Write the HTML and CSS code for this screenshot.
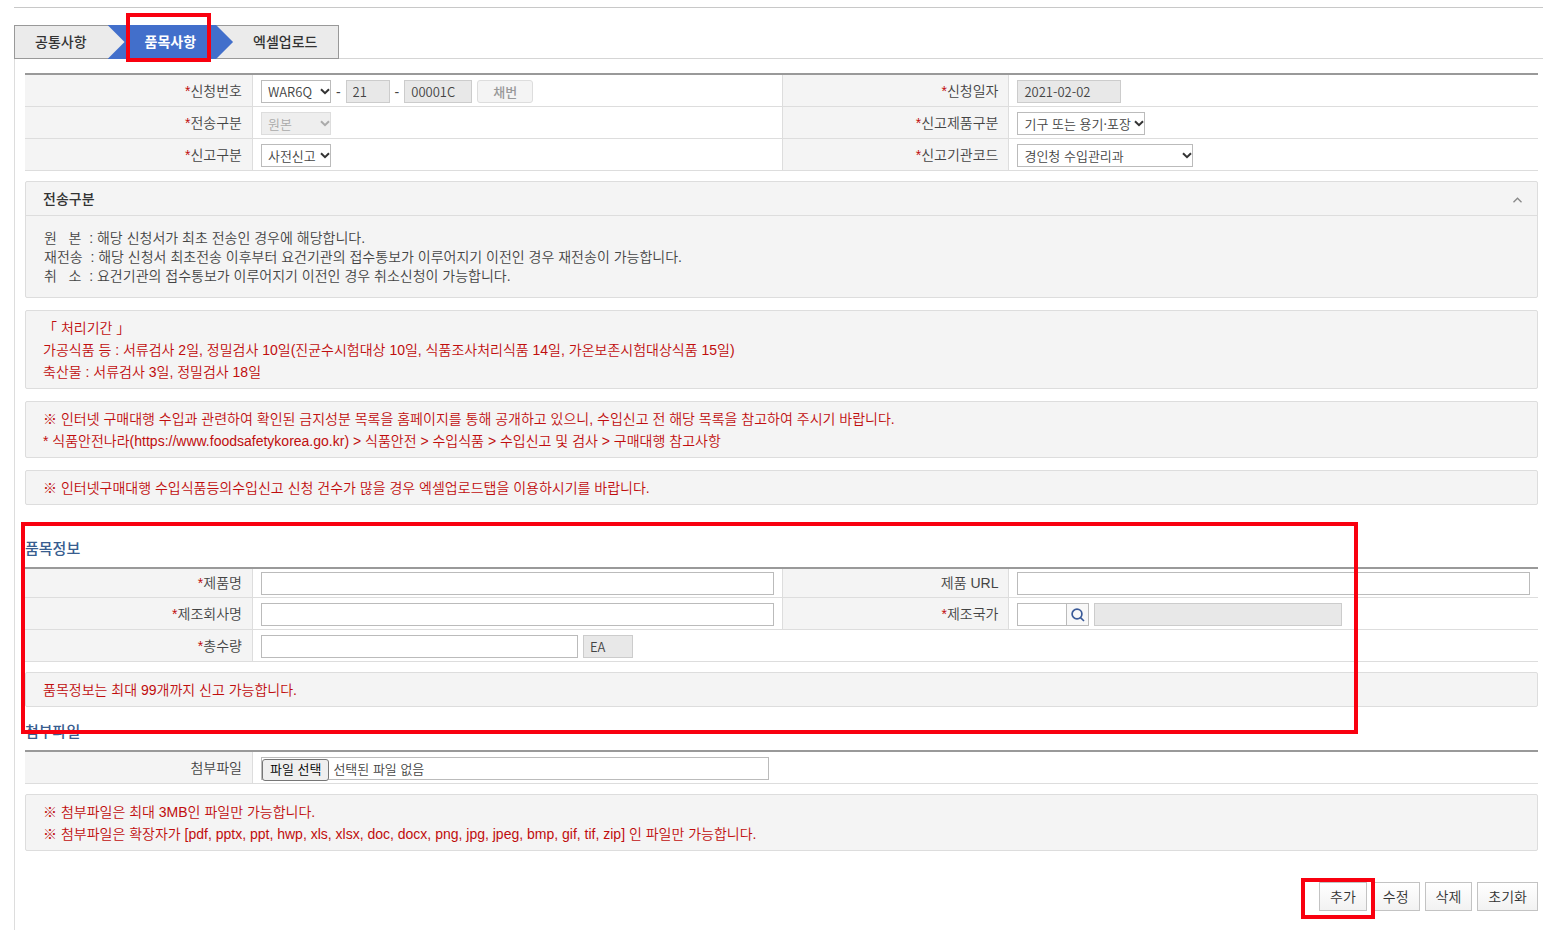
FILE: index.html
```html
<!DOCTYPE html>
<html lang="ko">
  <head>
    <meta charset="utf-8" />
    <title>품목사항</title>
    <link rel="stylesheet" href="styles.css">
  </head>

  <body>
    <div class="page">
      <nav class="tabs">
        <a class="tab" href="#common">공통사항</a>
        <div class="tab-current">
          <a class="tab tab-on" href="#item">품목사항</a>
          <span class="mark mark-tab"></span>
        </div>
        <a class="tab" href="#excel">엑셀업로드</a>
      </nav>

      <main class="panel">
        <table class="form-table">
          <tr>
            <th><label for="req-no"><i>*</i>신청번호</label></th>
            <td>
              <div class="fields">
                <select id="req-no" class="w-70"><option>WAR6Q</option></select>
                <span class="dash">-</span>
                <input class="w-44" type="text" value="21" aria-label="연도" readonly>
                <span class="dash">-</span>
                <input class="w-68" type="text" value="00001C" aria-label="일련번호" readonly>
                <button class="btn-small" type="button" disabled>채번</button>
              </div>
            </td>
            <th><label for="req-date"><i>*</i>신청일자</label></th>
            <td><div class="fields"><input id="req-date" class="w-104" type="text" value="2021-02-02" readonly></div></td>
          </tr>
          <tr>
            <th><label for="send-type"><i>*</i>전송구분</label></th>
            <td><div class="fields"><select id="send-type" class="w-70" disabled><option>원본</option></select></div></td>
            <th><label for="product-type"><i>*</i>신고제품구분</label></th>
            <td><div class="fields"><select id="product-type" class="w-128"><option>기구 또는 용기·포장</option></select></div></td>
          </tr>
          <tr>
            <th><label for="report-type"><i>*</i>신고구분</label></th>
            <td><div class="fields"><select id="report-type" class="w-70"><option>사전신고</option></select></div></td>
            <th><label for="office"><i>*</i>신고기관코드</label></th>
            <td><div class="fields"><select id="office" class="w-176"><option>경인청 수입관리과</option></select></div></td>
          </tr>
        </table>

        <section class="guide">
          <div class="guide-head">
            <h2>전송구분</h2>
            <button class="fold" type="button" aria-label="접기">
              <svg width="9" height="6" viewBox="0 0 9 6"><path d="M0.5 5.2 4.5 1.2 8.5 5.2" fill="none" stroke="#888" stroke-width="1.3"/></svg>
            </button>
          </div>
          <div class="guide-body">
            <p>원 &nbsp; 본 &nbsp;: 해당 신청서가 최초 전송인 경우에 해당합니다.</p>
            <p>재전송 &nbsp;: 해당 신청서 최초전송 이후부터 요건기관의 접수통보가 이루어지기 이전인 경우 재전송이 가능합니다.</p>
            <p>취 &nbsp; 소 &nbsp;: 요건기관의 접수통보가 이루어지기 이전인 경우 취소신청이 가능합니다.</p>
          </div>
        </section>

        <div class="notice">
          <p>「 처리기간 」</p>
          <p>가공식품 등 : 서류검사 2일, 정밀검사 10일(진균수시험대상 10일, 식품조사처리식품 14일, 가온보존시험대상식품 15일)</p>
          <p>축산물 : 서류검사 3일, 정밀검사 18일</p>
        </div>
        <div class="notice">
          <p>※ 인터넷 구매대행 수입과 관련하여 확인된 금지성분 목록을 홈페이지를 통해 공개하고 있으니, 수입신고 전 해당 목록을 참고하여 주시기 바랍니다.</p>
          <p>* 식품안전나라(https://www.foodsafetykorea.go.kr) &gt; 식품안전 &gt; 수입식품 &gt; 수입신고 및 검사 &gt; 구매대행 참고사항</p>
        </div>
        <div class="notice">
          <p>※ 인터넷구매대행 수입식품등의수입신고 신청 건수가 많을 경우 엑셀업로드탭을 이용하시기를 바랍니다.</p>
        </div>

        <section class="item-info">
          <h2 class="title">품목정보</h2>
          <table class="form-table">
            <tr class="row-short">
              <th><label for="name"><i>*</i>제품명</label></th>
              <td><div class="fields"><input id="name" class="w-full" type="text"></div></td>
              <th><label for="url">제품 URL</label></th>
              <td><div class="fields"><input id="url" class="w-full" type="text"></div></td>
            </tr>
            <tr>
              <th><label for="maker"><i>*</i>제조회사명</label></th>
              <td><div class="fields"><input id="maker" class="w-full" type="text"></div></td>
              <th><label for="country"><i>*</i>제조국가</label></th>
              <td>
                <div class="fields">
                  <div class="search">
                    <input id="country" type="text">
                    <button type="button" aria-label="국가 검색">
                      <svg width="14" height="14" viewBox="0 0 14 14" fill="none" stroke="#3a5a98" stroke-width="1.7"><circle cx="6" cy="6" r="4.9"/><path d="M9 9.2 13 13"/></svg>
                    </button>
                  </div>
                  <input class="w-248" type="text" aria-label="국가명" readonly>
                </div>
              </td>
            </tr>
            <tr>
              <th><label for="total"><i>*</i>총수량</label></th>
              <td colspan="3">
                <div class="fields">
                  <input id="total" class="w-317" type="text">
                  <input class="w-50" type="text" value="EA" aria-label="단위" readonly>
                </div>
              </td>
            </tr>
          </table>
          <div class="notice">
            <p>품목정보는 최대 99개까지 신고 가능합니다.</p>
          </div>
          <span class="mark mark-item"></span>
        </section>

        <section class="attach">
          <h2 class="title">첨부파일</h2>
          <table class="form-table">
            <tr>
              <th><label for="file">첨부파일</label></th>
              <td colspan="3">
                <div class="file">
                  <label class="file-btn" for="file">파일 선택</label>
                  <span>선택된 파일 없음</span>
                  <input id="file" type="file">
                </div>
              </td>
            </tr>
          </table>
          <div class="notice">
            <p>※ 첨부파일은 최대 3MB인 파일만 가능합니다.</p>
            <p>※ 첨부파일은 확장자가 [pdf, pptx, ppt, hwp, xls, xlsx, doc, docx, png, jpg, jpeg, bmp, gif, tif, zip] 인 파일만 가능합니다.</p>
          </div>
        </section>

        <div class="buttons">
          <div class="add">
            <button class="btn" type="button">추가</button>
            <span class="mark mark-add"></span>
          </div>
          <button class="btn" type="button">수정</button>
          <button class="btn" type="button">삭제</button>
          <button class="btn" type="button">초기화</button>
        </div>
      </main>
    </div>
  </body>
</html>
```

FILE: styles.css
```css
* {
  box-sizing: border-box;
}

body {
  margin: 0;
  background-color: #fff;
  color: #444;
  font-family: "Liberation Sans", "Noto Sans CJK KR", sans-serif;
  font-size: 14px;
  font-weight: 350;
}

h2,
p {
  margin: 0;
}

i {
  color: #c00d0d;
  font-style: normal;
}

input,
select,
button {
  margin: 0;
  font-family: inherit;
  font-weight: inherit;
}

.page {
  display: flex;
  flex-direction: column;
  min-height: 100vh;
  padding: 7px 0 0 14px;
}

/* tabs */
.tabs {
  display: flex;
  height: 52px;
  padding-top: 17px;
  border-top: 1px solid #c8c8c8;
  border-bottom: 1px solid #d5d5d5;
}

.tab {
  display: block;
  height: 34px;
  padding: 0 21px 0 20px;
  border: 1px solid #999;
  background-color: #ebebeb;
  color: #333;
  font-weight: 500;
  line-height: 32px;
  text-decoration: none;
}

.tab:first-child {
  border-right: none;
}

.tab:last-child {
  border-left: none;
}

.tab-current {
  position: relative;
  height: 34px;
  background-color: #ebebeb;
  border-top: 1px solid #999;
  border-bottom: 1px solid #999;
}

.tab-on {
  margin-top: -1px;
  padding: 0 37px;
  border: none;
  background-color: #426fcb;
  color: #fff;
  font-weight: 700;
  line-height: 34px;
  clip-path: polygon(0 0, calc(100% - 17px) 0, 100% 50%, calc(100% - 17px) 100%, 0 100%, 17px 50%);
}

/* main panel */
.panel {
  flex: 1;
  padding: 14px 5px 16px 10px;
  border-left: 1px solid #ddd;
}

.form-table {
  width: 100%;
  border-top: 2px solid #999;
  border-spacing: 0;
  table-layout: fixed;
}

.form-table th,
.form-table td {
  height: 32px;
  padding: 0 8px;
  border-bottom: 1px solid #ddd;
}

.form-table td {
  border-left: 1px solid #ddd;
}

.form-table .row-short th,
.form-table .row-short td {
  height: 29px;
}

.form-table th {
  width: 15%;
  padding-right: 10px;
  background-color: #f4f4f4;
  font-weight: inherit;
  line-height: 20px;
  text-align: right;
}

.form-table td + th {
  border-left: 1px solid #ddd;
}

.fields {
  display: flex;
  align-items: center;
  gap: 5px;
  padding-top: 2px;
}

.row-short .fields {
  padding-top: 0;
}

.fields input,
.fields select {
  height: 23px;
  padding: 0 6px;
  border: 1px solid #bbb;
  border-radius: 0;
  background-color: #fff;
  color: #444;
  font-family: "Noto Sans CJK KR", sans-serif;
  font-size: 13px;
}

.fields select {
  padding: 0 0 0 6px;
  background-image: url("data:image/svg+xml,%3Csvg xmlns='http://www.w3.org/2000/svg' width='10' height='7'%3E%3Cpath d='M1 1.2 5 5.2 9 1.2' fill='none' stroke='%23333' stroke-width='2'/%3E%3C/svg%3E");
  background-position: right 0 center;
  background-repeat: no-repeat;
  appearance: none;
}

.fields input:read-only {
  border-color: #ccc;
  background-color: #e8e8e8;
}

.fields select:disabled {
  border-color: #ddd;
  background-color: #eee;
  background-image: url("data:image/svg+xml,%3Csvg xmlns='http://www.w3.org/2000/svg' width='10' height='7'%3E%3Cpath d='M1 1.2 5 5.2 9 1.2' fill='none' stroke='%23aaa' stroke-width='2'/%3E%3C/svg%3E");
  color: #aaa;
  opacity: 1;
}

.dash {
  line-height: 20px;
}

.btn-small {
  width: 56px;
  height: 23px;
  padding: 0;
  border: 1px solid #ddd;
  border-radius: 3px;
  background-color: #f4f4f4;
  color: #999;
  font-size: 13px;
  font-weight: 500;
}

.w-44 { width: 44px; }
.w-50 { width: 50px; }
.w-68 { width: 68px; }
.w-70 { width: 70px; }
.w-104 { width: 104px; }
.w-128 { width: 128px; }
.w-176 { width: 176px; }
.w-248 { width: 248px; }
.w-317 { width: 317px; }
.w-full { width: 100%; }

.search {
  display: flex;
}

.search input {
  width: 50px;
}

.search button {
  display: flex;
  align-items: center;
  justify-content: center;
  width: 22px;
  height: 23px;
  padding: 0;
  border: 1px solid #bbb;
  border-left: none;
  background-color: #f8f8f8;
}

/* guide */
.guide {
  margin-top: 10px;
  border: 1px solid #ddd;
  border-radius: 2px;
  background-color: #f4f4f4;
}

.guide-head {
  display: flex;
  align-items: center;
  justify-content: space-between;
  height: 34px;
  padding: 0 15px 0 17px;
  border-bottom: 1px solid #ddd;
}

.guide-head h2 {
  color: #333;
  font-size: 14px;
  font-weight: 500;
  line-height: 20px;
}

.fold {
  display: flex;
  padding: 2px 0 0;
  border: none;
  background: none;
}

.guide-body {
  padding: 13px 18px 11px;
  line-height: 19px;
}

.notice {
  margin-top: 12px;
  padding: 6px 17px 5px;
  border: 1px solid #ddd;
  border-radius: 2px;
  background-color: #f4f4f4;
  color: #c00d0d;
  line-height: 22px;
}

.form-table + .notice {
  margin-top: 10px;
}

.title {
  padding-bottom: 7px;
  color: #385d8f;
  font-size: 15px;
  font-weight: 500;
  line-height: 22px;
}

.item-info {
  position: relative;
  padding-top: 33px;
}

.attach {
  padding-top: 14px;
}

.file {
  position: relative;
  display: flex;
  align-items: flex-start;
  gap: 4px;
  width: 508px;
  height: 23px;
  margin-top: 2px;
  border: 1px solid #bbb;
  font-size: 13px;
  line-height: 24px;
}

.file-btn {
  height: 22px;
  margin-top: 1px;
  padding: 0 7px;
  border: 1px solid #767676;
  border-radius: 3px;
  background-color: #efefef;
  color: #000;
  line-height: 20px;
}

.file input {
  position: absolute;
  inset: 0;
  width: 100%;
  opacity: 0;
}

/* bottom buttons */
.buttons {
  display: flex;
  justify-content: flex-end;
  gap: 5px;
  margin-top: 31px;
}

.btn {
  height: 29px;
  padding: 0 10px;
  border: 1px solid #c3c3c3;
  background: linear-gradient(#fff, #f2f2f2);
  color: #333;
  font-size: 14px;
  line-height: 20px;
}

.add {
  position: relative;
}

/* red outlines */
.mark {
  position: absolute;
  border: 4px solid #f9000f;
  pointer-events: none;
}

.mark-tab {
  top: -13px;
  right: 22px;
  bottom: -4px;
  left: 18px;
}

.mark-item {
  top: 17px;
  right: 180px;
  bottom: -27px;
  left: -4px;
}

.mark-add {
  top: -4px;
  right: -8px;
  bottom: -8px;
  left: -18px;
}
```
